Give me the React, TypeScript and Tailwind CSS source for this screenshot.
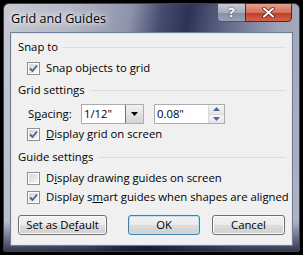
import React from 'react';

const Check: React.FC<{ checked?: boolean }> = ({ checked }) => (
  <span className="w-[13px] h-[13px] shrink-0 border border-[#8e8f8f] bg-white p-[1px] flex">
    <span className="flex-1 bg-[linear-gradient(135deg,#d3d6da,#f6f6f6)] flex items-center justify-center">
      {checked && (
        <svg width="9" height="9" viewBox="0 0 9 9">
          <path d="M1 4.5 L3.5 7 L8 1.5" fill="none" stroke="#4c5e8a" strokeWidth="1.8" />
        </svg>
      )}
    </span>
  </span>
);

const Header: React.FC<{ label: string; className?: string }> = ({ label, className }) => (
  <div className={`h-[18px] flex items-center gap-[5px] ${className ?? ''}`}>
    <span>{label}</span>
    <span className="flex-1 h-px bg-[#d5dfe5]" />
  </div>
);

const CheckRow: React.FC<{ checked?: boolean; className?: string; children: React.ReactNode }> = ({ checked, className, children }) => (
  <div className={`h-[18px] flex items-center gap-[6px] pl-[9px] whitespace-nowrap ${className ?? ''}`}>
    <Check checked={checked} />
    <span>{children}</span>
  </div>
);

const Button: React.FC<{ def?: boolean; className?: string; children: React.ReactNode }> = ({ def, className, children }) => (
  <div
    className={`h-[20px] rounded-[3px] border flex items-center justify-center ${
      def
        ? 'border-[#3c7fb1] shadow-[inset_0_0_0_1px_#b9e4f6]'
        : 'border-[#707070] shadow-[inset_0_0_0_1px_#fbfbfb]'
    } bg-[linear-gradient(#f2f2f2_0%,#ebebeb_50%,#dddddd_51%,#cfcfcf_100%)] ${className ?? ''}`}
  >
    {children}
  </div>
);

export default function App() {
  return (
    <div className="w-[303px] h-[255px] bg-black p-[3px] font-['Segoe_UI','Open_Sans',sans-serif] text-[11.3px] text-black leading-none">
      <div className="h-full rounded-t-[6px] rounded-b-[2px] border border-[#3a4058] bg-[linear-gradient(180deg,transparent_0%,transparent_88%,rgba(12,16,40,0.75)_100%),linear-gradient(100deg,#c6c9d2_0%,#b3b7c5_20%,#8d92ab_38%,#454c6e_47%,#2c3354_55%,#5e6587_66%,#9ea3b8_82%,#b0b4c2_100%)] flex flex-col px-[6px] pb-[5px]">
        <div className="h-[28px] flex items-start">
          <span className="mt-[9px] ml-[1px] text-[12.6px] [text-shadow:0_0_8px_#ffffff,0_0_4px_#ffffff]">Grid and Guides</span>
          <div className="ml-auto flex -mt-px mr-[1px]">
            <div className="w-[28px] h-[19px] rounded-bl-[4px] border border-[#4d5670] border-r-0 bg-[linear-gradient(#c5cad6_0%,#a6acbd_50%,#878ea3_51%,#9aa1b4_100%)] flex items-center justify-center text-white font-bold text-[13px] [text-shadow:0_0_2px_#333]">
              ?
            </div>
            <div className="w-[47px] h-[19px] rounded-br-[4px] border border-[#4d2a2a] bg-[linear-gradient(#e6a08f_0%,#d4725d_50%,#c03c22_51%,#d2644a_100%)] flex items-center justify-center">
              <svg width="13" height="11" viewBox="0 0 13 11">
                <path d="M2 1.5 L11 9.5 M11 1.5 L2 9.5" stroke="#4a1a12" strokeWidth="3.4" strokeLinecap="round" />
                <path d="M2 1.5 L11 9.5 M11 1.5 L2 9.5" stroke="#ffffff" strokeWidth="2" strokeLinecap="round" />
              </svg>
            </div>
          </div>
        </div>
        <div className="flex-1 bg-[#f0f0f0] border border-[#6f7f99] shadow-[inset_0_0_0_1px_#dfe6ee] pt-[5px] pl-[7px] pr-[6px]">
          <Header label="Snap to" />
          <CheckRow checked className="mt-[3px]">
            Snap objects to <u>g</u>rid
          </CheckRow>
          <Header label="Grid settings" className="mt-[4px]" />
          <div className="h-[22px] mt-[4px] flex items-center pl-[10px]">
            <span className="w-[53px]">
              S<u>p</u>acing:
            </span>
            <div className="w-[63px] h-[20px] border border-[#abadb3] bg-white flex items-center">
              <span className="flex-1 pl-[2px]">1/12"</span>
              <div className="w-[18px] h-full border-l border-[#707070] bg-[linear-gradient(#f2f2f2,#d4d4d4)] flex items-center justify-center">
                <svg width="7" height="4" viewBox="0 0 7 4">
                  <path d="M0 0 H7 L3.5 4 Z" fill="#000" />
                </svg>
              </div>
            </div>
            <div className="ml-[10px] w-[71px] h-[20px] border border-[#abadb3] bg-white flex items-center">
              <span className="flex-1 pl-[2px]">0.08"</span>
              <div className="w-[16px] h-full border-l border-[#d6d6d6] flex flex-col">
                <div className="flex-1 flex items-center justify-center bg-[linear-gradient(#f6f6f6,#e6e6e6)] border-b border-[#d6d6d6]">
                  <svg width="7" height="4" viewBox="0 0 7 4">
                    <path d="M0 4 H7 L3.5 0 Z" fill="#4f6a9a" />
                  </svg>
                </div>
                <div className="flex-1 flex items-center justify-center bg-[linear-gradient(#f6f6f6,#e6e6e6)]">
                  <svg width="7" height="4" viewBox="0 0 7 4">
                    <path d="M0 0 H7 L3.5 4 Z" fill="#4f6a9a" />
                  </svg>
                </div>
              </div>
            </div>
          </div>
          <CheckRow checked>
            <u>D</u>isplay grid on screen
          </CheckRow>
          <Header label="Guide settings" className="mt-[5px]" />
          <CheckRow className="mt-[3px]">
            D<u>i</u>splay drawing guides on screen
          </CheckRow>
          <CheckRow checked className="mt-[1px]">
            Display s<u>m</u>art guides when shapes are aligned
          </CheckRow>
          <div className="mt-[9px] flex">
            <Button className="w-[89px]">
              Set as De<u>f</u>ault
            </Button>
            <Button def className="w-[72px] ml-[21px]">
              OK
            </Button>
            <Button className="w-[73px] ml-[12px]">Cancel</Button>
          </div>
        </div>
      </div>
    </div>
  );
}
